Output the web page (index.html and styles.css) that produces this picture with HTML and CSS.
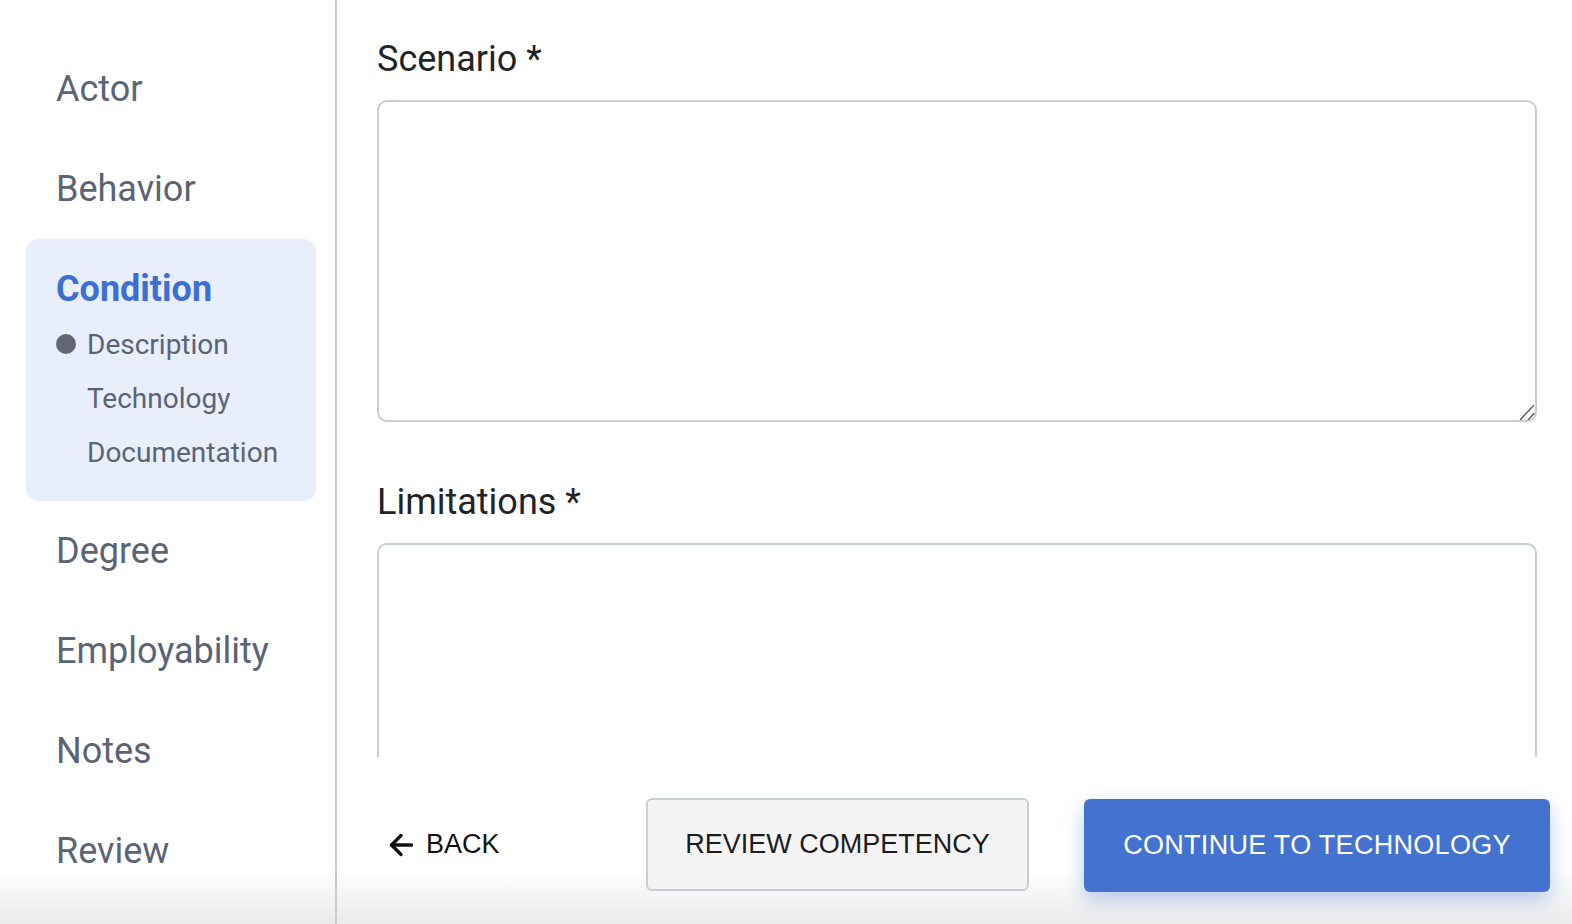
FILE: index.html
```html
<!DOCTYPE html>
<html lang="en">
<head>
<meta charset="utf-8">
<title>Condition - Description</title>
<link rel="stylesheet" href="styles.css">
</head>
<body>
<div class="layout">
  <aside class="sidebar">
    <nav class="nav">
      <div class="nav-item">Actor</div>
      <div class="nav-item">Behavior</div>
      <div class="nav-group">
        <div class="nav-group-title">Condition</div>
        <div class="sub-item active"><span class="bullet"></span>Description</div>
        <div class="sub-item">Technology</div>
        <div class="sub-item">Documentation</div>
      </div>
      <div class="nav-item">Degree</div>
      <div class="nav-item">Employability</div>
      <div class="nav-item">Notes</div>
      <div class="nav-item">Review</div>
    </nav>
  </aside>
  <main class="main">
    <div class="content">
      <div class="field">
        <label class="field-label" for="scenario">Scenario *</label>
        <div class="input-wrap">
          <textarea id="scenario" class="field-input"></textarea>
          <svg class="grip" width="16" height="16" viewBox="0 0 16 16" fill="none" stroke="#555" stroke-width="1.3" stroke-linecap="round"><path d="M1.5 15.5L14.5 1.5"/><path d="M9.5 15.5L15 9.5"/></svg>
        </div>
      </div>
      <div class="field">
        <label class="field-label" for="limitations">Limitations *</label>
        <div class="input-wrap">
          <textarea id="limitations" class="field-input"></textarea>
        </div>
      </div>
    </div>
    <div class="footer">
      <button class="btn-back" type="button">
        <svg class="back-icon" width="24" height="24" viewBox="0 0 24 24" fill="none" stroke="#111" stroke-width="3.4" stroke-linecap="round" stroke-linejoin="round"><path d="M22.5 12H2.5"/><path d="M12 2.5L2.5 12l9.5 9.5"/></svg>
        <span>BACK</span>
      </button>
      <button class="btn-secondary" type="button">REVIEW COMPETENCY</button>
      <button class="btn-primary" type="button">CONTINUE TO TECHNOLOGY</button>
    </div>
  </main>
</div>
</body>
</html>
```

FILE: styles.css
```css
* { box-sizing: border-box; }

html, body {
  margin: 0;
  padding: 0;
  height: 924px;
}

body {
  font-family: Roboto, "Liberation Sans", Arial, sans-serif;
  background: linear-gradient(to bottom, #ffffff 0, #ffffff 868px, #ebebeb 924px);
  overflow: hidden;
}

.layout {
  display: flex;
  height: 924px;
}

.sidebar {
  width: 337px;
  flex: 0 0 337px;
  border-right: 2px solid #c9ccd1;
}

.nav {
  padding-top: 39px;
}

.nav-item {
  height: 100px;
  line-height: 100px;
  padding-left: 56px;
  font-size: 36px;
  color: #5a6474;
}

.nav-group {
  margin: 0 19px 0 26px;
  height: 262px;
  padding: 25px 0 22px 30px;
  background: #e8effb;
  border-radius: 12px;
}

.nav-group-title {
  font-size: 36px;
  line-height: 50px;
  font-weight: 700;
  color: #3d6fd3;
  margin-bottom: 3px;
}

.sub-item {
  display: flex;
  align-items: center;
  height: 54px;
  padding-left: 31px;
  font-size: 28px;
  color: #5a6474;
}

.sub-item.active {
  padding-left: 0;
  gap: 11px;
}

.bullet {
  width: 20px;
  height: 20px;
  border-radius: 50%;
  background: #5f6675;
  flex: 0 0 20px;
}

.main {
  flex: 1;
  display: flex;
  flex-direction: column;
  min-width: 0;
}

.content {
  height: 757px;
  overflow: hidden;
  padding: 38px 35px 0 40px;
}

.field + .field {
  margin-top: 59px;
}

.field-label {
  display: block;
  font-size: 36px;
  line-height: 43px;
  color: #222326;
  margin-bottom: 19px;
}

.input-wrap {
  position: relative;
}

.field-input {
  display: block;
  width: 100%;
  height: 322px;
  border: 2px solid #c8ccd3;
  border-radius: 10px;
  background: #fff;
  resize: none;
  font-family: inherit;
  font-size: 24px;
  padding: 12px 16px;
  outline: none;
}

.grip {
  position: absolute;
  right: 2px;
  bottom: 2px;
}

.footer {
  display: flex;
  align-items: flex-start;
  padding: 41px 22px 0 40px;
  flex: 1;
}

.btn-back {
  display: flex;
  align-items: center;
  gap: 13px;
  height: 93px;
  padding: 0 0 0 12px;
  border: none;
  background: transparent;
  font-family: "Liberation Sans", Arial, sans-serif;
  font-size: 27px;
  color: #111;
  cursor: pointer;
}

.back-icon {
  display: block;
}

.btn-secondary {
  margin-left: auto;
  height: 93px;
  width: 383px;
  padding: 0;
  border: 2px solid #c8ccd3;
  border-radius: 6px;
  background: #f4f4f4;
  font-family: "Liberation Sans", Arial, sans-serif;
  font-size: 27px;
  color: #1c1c1c;
  cursor: pointer;
}

.btn-primary {
  margin-left: 55px;
  margin-top: 1px;
  height: 93px;
  width: 466px;
  padding: 0;
  border: none;
  border-radius: 6px;
  background: #4473cf;
  box-shadow: 0 8px 20px rgba(68, 115, 207, 0.35);
  font-family: "Liberation Sans", Arial, sans-serif;
  font-size: 27px;
  letter-spacing: 0.3px;
  color: #ffffff;
  cursor: pointer;
}
```
